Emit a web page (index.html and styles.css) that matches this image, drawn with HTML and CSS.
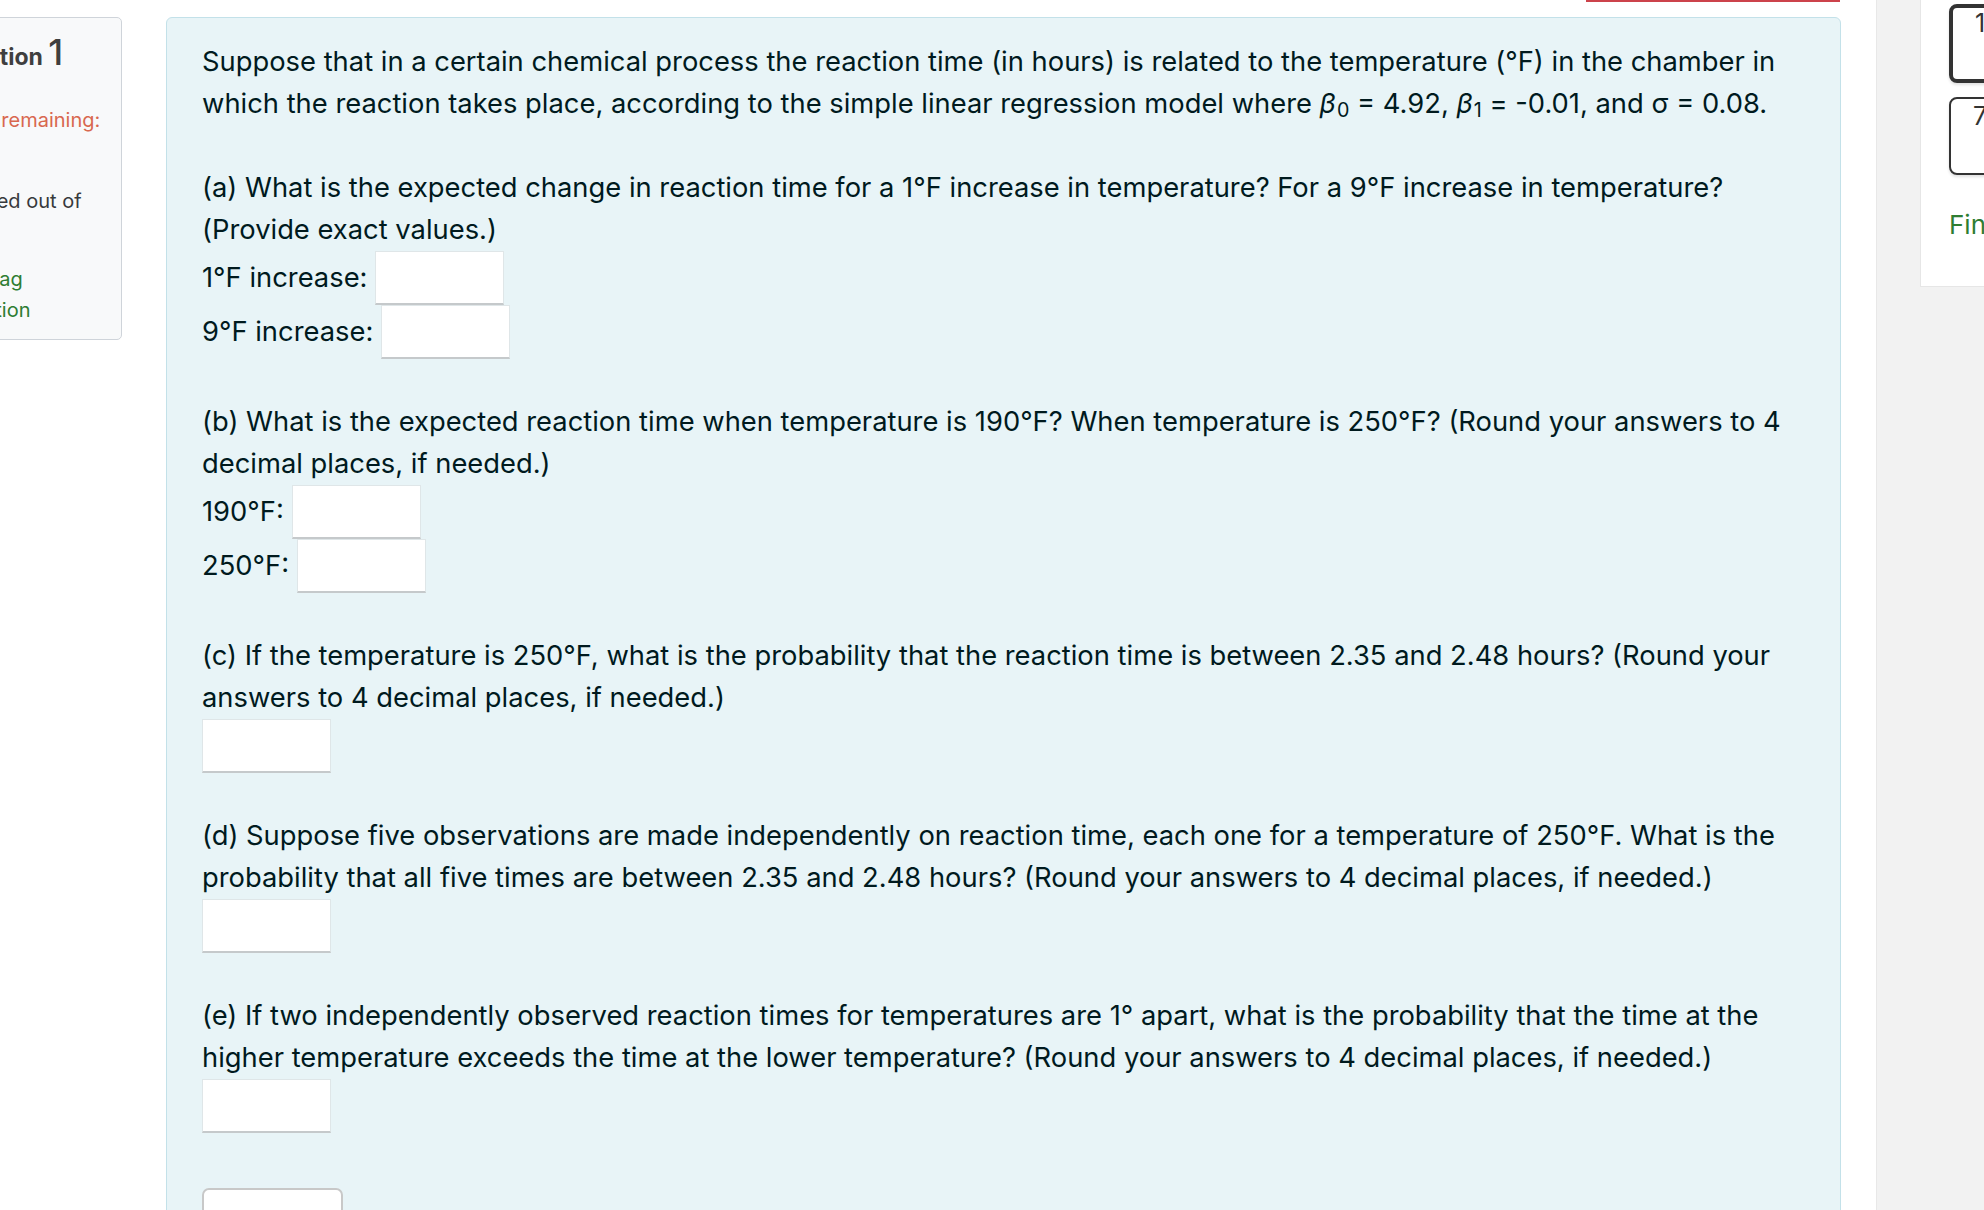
FILE: index.html
```html
<!DOCTYPE html>
<html lang="en">
<head>
<meta charset="utf-8">
<title>Question 1</title>
<link rel="stylesheet" href="styles.css">
</head>
<body>
<div class="page">
  <div class="main">
    <div class="timer-row"><div class="timer"></div></div>
    <div class="que">
      <div class="info">
        <h3 class="qno-line">Question <span class="qno">1</span></h3>
        <div class="state"><span class="tries">Tries remaining:</span> 3</div>
        <div class="grade">Marked out of 1.00</div>
        <div class="flag"><svg class="flag-icon" width="28" height="24" viewBox="0 0 28 24"><path d="M6 3v18M6 4h14l-3 4 3 4H6" fill="none" stroke="#2e7d32" stroke-width="2"/></svg> Flag question</div>
      </div>
      <div class="formulation">
        <p>Suppose that in a certain chemical process the reaction time (in hours) is related to the temperature (°F) in the chamber in which the reaction takes place, according to the simple linear regression model where <i>β</i><sub>0</sub> = 4.92, <i>β</i><sub>1</sub> = -0.01, and σ = 0.08.</p>

        <div class="part">
          <p>(a) What is the expected change in reaction time for a 1°F increase in temperature? For a 9°F increase in temperature? (Provide exact values.)</p>
          <div class="answer"><label>1°F increase:</label><input class="ans" type="text"></div>
          <div class="answer"><label>9°F increase:</label><input class="ans" type="text"></div>
        </div>

        <div class="part">
          <p>(b) What is the expected reaction time when temperature is 190°F? When temperature is 250°F? (Round your answers to 4 decimal places, if needed.)</p>
          <div class="answer"><label>190°F:</label><input class="ans" type="text"></div>
          <div class="answer"><label>250°F:</label><input class="ans" type="text"></div>
        </div>

        <div class="part">
          <p>(c) If the temperature is 250°F, what is the probability that the reaction time is between 2.35 and 2.48 hours? (Round your answers to 4 decimal places, if needed.)</p>
          <div class="answer"><input class="ans" type="text"></div>
        </div>

        <div class="part">
          <p>(d) Suppose five observations are made independently on reaction time, each one for a temperature of 250°F. What is the probability that all five times are between 2.35 and 2.48 hours? (Round your answers to 4 decimal places, if needed.)</p>
          <div class="answer"><input class="ans" type="text"></div>
        </div>

        <div class="part">
          <p>(e) If two independently observed reaction times for temperatures are 1° apart, what is the probability that the time at the higher temperature exceeds the time at the lower temperature? (Round your answers to 4 decimal places, if needed.)</p>
          <div class="answer"><input class="ans" type="text"></div>
        </div>

        <button class="check" type="button">Check</button>
      </div>
    </div>
  </div>
  <aside class="drawer">
    <div class="navcard">
      <div class="qn current">1</div>
      <div class="qn">7</div>
      <div class="finish">Finish attempt ...</div>
    </div>
  </aside>
</div>
</body>
</html>
```
FILE: styles.css
```css
html, body {
  margin: 0;
  padding: 0;
  background: #ffffff;
}

body {
  font-family: Inter, "Noto Sans", "Liberation Sans", sans-serif;
  color: #001a1e;
  overflow: hidden;
}

.page {
  display: flex;
  height: 1210px;
  overflow: hidden;
}

.main {
  flex: none;
  width: 1876px;
}

.timer-row {
  display: flex;
  justify-content: flex-end;
  padding-right: 36px;
  height: 2px;
}

.timer {
  box-sizing: border-box;
  width: 254px;
  height: 2px;
  border: 2px solid #cc434b;
  border-top: none;
}

.que {
  display: flex;
  align-items: flex-start;
  gap: 44px;
  margin-top: 15px;
}

/* left info box */
.info {
  flex: none;
  box-sizing: border-box;
  width: 186px;
  margin-left: -64px;
  padding: 16px 10px 13px 12px;
  background: #f8f9fa;
  border: 1px solid #cfd4da;
  border-radius: 5px;
  font-size: 20px;
  line-height: 31px;
  color: #373a3c;
}

.qno-line {
  margin: 0 0 30px -8px;
  font-size: 23px;
  font-weight: 700;
  line-height: 36px;
  color: #3f3f3f;
  white-space: nowrap;
}

.qno {
  font-size: 36px;
  font-weight: 500;
}

.state {
  margin-bottom: 19px;
}

.tries {
  color: #d8684f;
}

.grade {
  margin-bottom: 16px;
}

.flag {
  width: 150px;
  color: #2e7d32;
}

.flag-icon {
  width: 28px;
  height: 24px;
  vertical-align: -4px;
}

/* question text panel */
.formulation {
  flex: none;
  box-sizing: border-box;
  width: 1675px;
  padding: 23px 36px 40px 35px;
  background: #e8f4f7;
  border: 1px solid #c3e1e9;
  border-radius: 6px;
  font-size: 27.35px;
  line-height: 42px;
}

.formulation p {
  margin: 0;
}

.formulation sub {
  font-size: 0.72em;
  line-height: 0;
  vertical-align: -0.22em;
  margin-left: 1px;
}

.part {
  margin-top: 42px;
}

.answer {
  display: flex;
  align-items: center;
  gap: 8px;
  height: 54px;
}

.ans {
  box-sizing: border-box;
  width: 129px;
  height: 54px;
  margin: 0;
  padding: 0 8px;
  background: #ffffff;
  border: 1px solid #dfe6e8;
  border-bottom: 2px solid #c5c9cb;
  border-radius: 0;
  font: inherit;
}

.check {
  display: block;
  box-sizing: border-box;
  width: 141px;
  height: 68px;
  margin-top: 55px;
  background: #ffffff;
  border: 2px solid #c8c8c8;
  border-radius: 7px;
  font-family: inherit;
  font-size: 24px;
  color: #1d2125;
}

/* right drawer */
.drawer {
  flex: 1;
  box-sizing: border-box;
  background: #f2f2f2;
  border-left: 1px solid #e8e8e8;
  padding-left: 43px;
  overflow: hidden;
}

.navcard {
  box-sizing: border-box;
  width: 220px;
  height: 287px;
  padding: 4px 0 0 28px;
  background: #ffffff;
  border: 1px solid #e6e6e6;
  border-top: none;
}

.qn {
  box-sizing: border-box;
  width: 62px;
  height: 78px;
  margin-bottom: 14px;
  padding-top: 2px;
  border: 2px solid #333333;
  border-radius: 8px;
  text-align: center;
  font-size: 25px;
  line-height: 30px;
  color: #333333;
  box-shadow: 0 2px 3px rgba(0, 0, 0, 0.12);
}

.qn.current {
  height: 79px;
  border-width: 4px;
  padding-top: 0;
}

.finish {
  margin-top: 35px;
  font-size: 26px;
  line-height: 30px;
  color: #2e7d32;
  white-space: nowrap;
}
```
